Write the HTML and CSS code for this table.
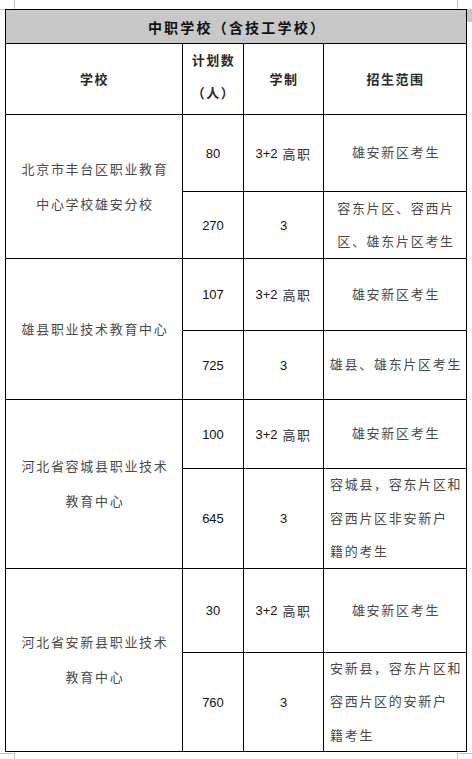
FILE: index.html
```html
<!DOCTYPE html>
<html lang="zh-CN">
<head>
<meta charset="utf-8">
<title>中职学校（含技工学校）</title>
<link rel="stylesheet" href="styles.css">
</head>
<body>
<div class="page">
  <span class="mark mark-tl-v"></span>
  <span class="mark mark-tl-h"></span>
  <span class="mark mark-tr-v"></span>
  <span class="mark mark-tr-fill"></span>
  <span class="mark mark-bl-h"></span>
  <span class="mark mark-bl-v"></span>
  <span class="mark mark-br-h"></span>
  <span class="mark mark-br-v"></span>

  <div class="table">
    <div class="cell title">中职学校（含技工学校）</div>

    <div class="cell head">学校</div>
    <div class="cell head two">计划数<br>（人）</div>
    <div class="cell head">学制</div>
    <div class="cell head">招生范围</div>

    <div class="cell school span2">北京市丰台区职业教育<br>中心学校雄安分校</div>
    <div class="cell num">80</div>
    <div class="cell num"><span>3+2</span><span class="cn">高职</span></div>
    <div class="cell range">雄安新区考生</div>
    <div class="cell num">270</div>
    <div class="cell num">3</div>
    <div class="cell range multi">容东片区、容西片<br>区、雄东片区考生</div>

    <div class="cell school span2">雄县职业技术教育中心</div>
    <div class="cell num">107</div>
    <div class="cell num"><span>3+2</span><span class="cn">高职</span></div>
    <div class="cell range">雄安新区考生</div>
    <div class="cell num">725</div>
    <div class="cell num">3</div>
    <div class="cell range">雄县、雄东片区考生</div>

    <div class="cell school span2">河北省容城县职业技术<br>教育中心</div>
    <div class="cell num">100</div>
    <div class="cell num"><span>3+2</span><span class="cn">高职</span></div>
    <div class="cell range">雄安新区考生</div>
    <div class="cell num">645</div>
    <div class="cell num">3</div>
    <div class="cell range multi left">容城县，容东片区和<br>容西片区非安新户<br>籍的考生</div>

    <div class="cell school span2">河北省安新县职业技术<br>教育中心</div>
    <div class="cell num">30</div>
    <div class="cell num"><span>3+2</span><span class="cn">高职</span></div>
    <div class="cell range">雄安新区考生</div>
    <div class="cell num">760</div>
    <div class="cell num">3</div>
    <div class="cell range multi left">安新县，容东片区和<br>容西片区的安新户<br>籍考生</div>
  </div>
</div>
</body>
</html>
```

FILE: styles.css
```css
html, body {
  margin: 0;
  padding: 0;
  background: #ffffff;
}

.page {
  position: relative;
  width: 472px;
  height: 759px;
  overflow: hidden;
  padding-top: 9px;
  padding-left: 5px;
  box-sizing: border-box;
  font-family: "Liberation Sans", "Noto Sans CJK SC", sans-serif;
}

.table {
  display: grid;
  grid-template-columns: 177px 61px 80px 143px;
  grid-template-rows: 34px 71px 77px 67px 72px 69px 69px 100px 84px 99px;
  width: 462px;
  border-top: 1px solid #000;
  border-left: 1px solid #000;
  box-sizing: border-box;
}

.cell {
  border-right: 1px solid #000;
  border-bottom: 1px solid #000;
  display: flex;
  align-items: center;
  justify-content: center;
  text-align: center;
  box-sizing: border-box;
  font-size: 13px;
  color: #4a4a4a;
}

.title {
  grid-column: 1 / span 4;
  background: #c8c8c8;
  color: #111;
  font-weight: bold;
  font-size: 14px;
  letter-spacing: 2.2px;
  padding-left: 2px;
}

.head {
  font-weight: bold;
  color: #2a2a2a;
  letter-spacing: 1.5px;
  line-height: 33px;
  padding-left: 1px;
}

.head.two {
  padding-bottom: 5px;
}

.school {
  grid-row: span 2;
  letter-spacing: 1.7px;
  line-height: 35px;
  padding-left: 2px;
}

.num {
  color: #111;
  font-size: 13px;
  letter-spacing: 0;
}

.cn {
  letter-spacing: 1.5px;
  color: #333;
  margin-left: 5px;
}

.range {
  letter-spacing: 1.7px;
  line-height: 33.5px;
  padding-left: 2px;
}

.range.left {
  justify-content: flex-start;
  text-align: left;
  padding-left: 6px;
}

.mark {
  position: absolute;
  background: #c4c4c4;
  display: block;
}

.mark-tl-v { left: 14px; top: 0; width: 1px; height: 9px; }
.mark-tl-h { left: 0; top: 9px; width: 5px; height: 1px; }
.mark-tr-v { left: 457px; top: 0; width: 1px; height: 9px; }
.mark-tr-fill { left: 467px; top: 9px; width: 5px; height: 13px; background: #c8c8c8; }
.mark-bl-h { left: 0; top: 753px; width: 15px; height: 1px; }
.mark-bl-v { left: 14px; top: 753px; width: 1px; height: 6px; }
.mark-br-h { left: 457px; top: 753px; width: 15px; height: 1px; }
.mark-br-v { left: 457px; top: 753px; width: 1px; height: 6px; }
```
